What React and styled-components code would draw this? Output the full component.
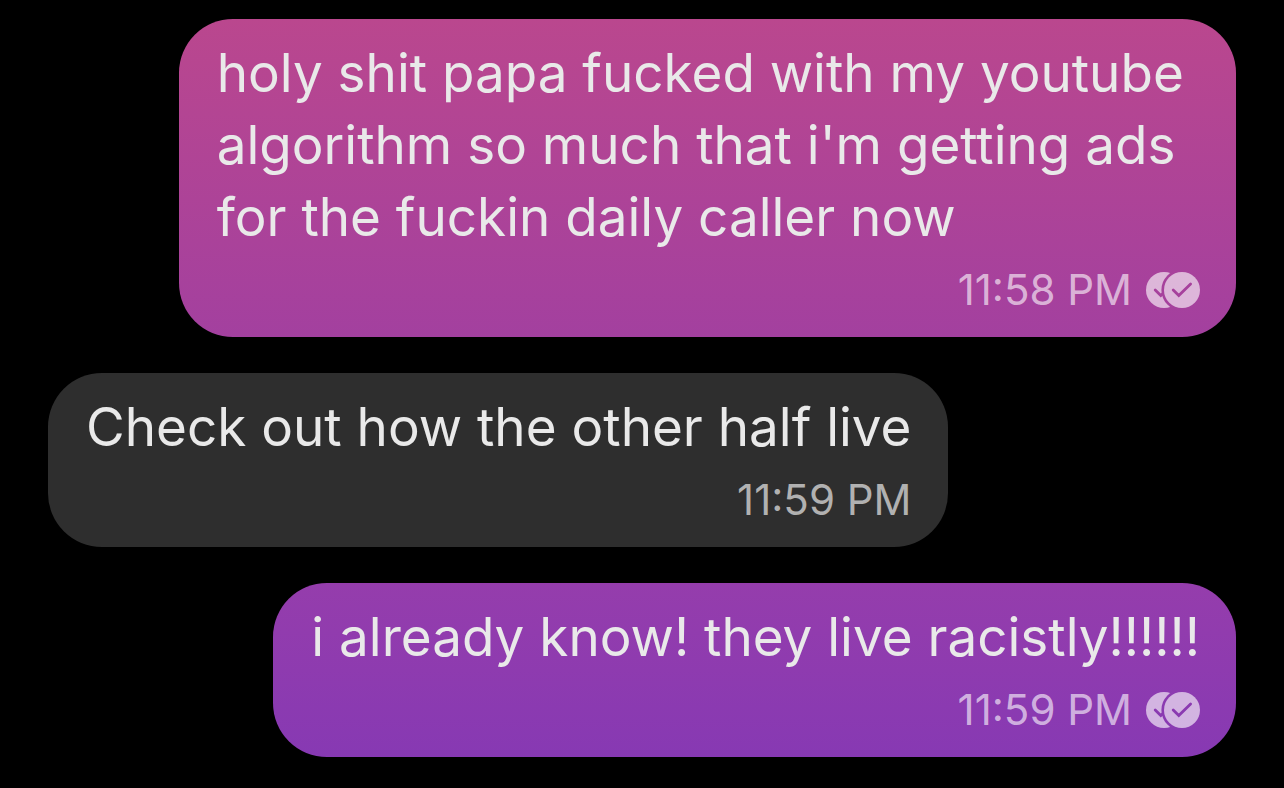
import React, { useId } from 'react';
import styled, { createGlobalStyle } from 'styled-components';

const GlobalStyle = createGlobalStyle`
  body {
    margin: 0;
    background-color: #000;
    font-family: Inter, 'Liberation Sans', sans-serif;
  }
`;

const BUBBLE_COLORS = {
  pink: 'linear-gradient(180deg, #ba478e 0%, #a3409f 100%)',
  gray: '#2e2e2e',
  purple: 'linear-gradient(180deg, #953dac 0%, #8739b3 100%)',
};

const messages = [
  {
    id: 1,
    text: "holy shit papa fucked with my youtube algorithm so much that i'm getting ads for the fuckin daily caller now",
    time: '11:58 PM',
    sent: true,
    color: 'pink',
  },
  {
    id: 2,
    text: 'Check out how the other half live',
    time: '11:59 PM',
    sent: false,
    color: 'gray',
  },
  {
    id: 3,
    text: 'i already know! they live racistly!!!!!!',
    time: '11:59 PM',
    sent: true,
    color: 'purple',
  },
];

const ReadIcon = () => {
  const id = useId();

  return (
    <svg width="54" height="36" viewBox="0 0 54 36" role="img" aria-label="Read">
      <defs>
        <mask id={`${id}-back`}>
          <rect width="54" height="36" fill="#fff" />
          <path d="M9.2 18 L14.8 23.6 L27 12" fill="none" stroke="#000" strokeWidth="2.8" strokeLinecap="round" />
          <circle cx="36" cy="18" r="20.6" fill="#000" />
        </mask>
        <mask id={`${id}-front`}>
          <rect width="54" height="36" fill="#fff" />
          <path d="M27.2 18 L32.8 23.6 L44.6 11.9" fill="none" stroke="#000" strokeWidth="2.8" strokeLinecap="round" />
        </mask>
      </defs>
      <circle cx="18" cy="18" r="18" fill="currentColor" mask={`url(#${id}-back)`} />
      <circle cx="36" cy="18" r="18" fill="currentColor" mask={`url(#${id}-front)`} />
    </svg>
  );
};

const Message = ({ message }) => {
  return (
    <Row $sent={message.sent}>
      <Bubble $color={message.color}>
        <Text>{message.text}</Text>
        <Meta $sent={message.sent}>
          <time>{message.time}</time>
          {message.sent && <ReadIcon />}
        </Meta>
      </Bubble>
    </Row>
  );
};

const App = () => {
  return (
    <>
      <GlobalStyle />
      <Chat>
        {messages.map((message) => (
          <Message key={message.id} message={message} />
        ))}
      </Chat>
    </>
  );
};

const Chat = styled.main`
  display: flex;
  flex-direction: column;
  gap: 36px;
  padding: 19px 48px 31px;
`;

const Row = styled.div`
  display: flex;
  justify-content: ${({ $sent }) => ($sent ? 'flex-end' : 'flex-start')};
`;

const Bubble = styled.article`
  box-sizing: border-box;
  max-width: 89%;
  padding: 18px 36px 20px 38px;
  border-radius: 54px;
  background: ${({ $color }) => BUBBLE_COLORS[$color]};
`;

const Text = styled.p`
  margin: 0 0 10px;
  font-size: 53px;
  line-height: 72px;
  color: #e9e9e9;
`;

const Meta = styled.div`
  display: flex;
  justify-content: flex-end;
  align-items: center;
  gap: 14px;
  font-size: 42px;
  line-height: 54px;
  color: ${({ $sent }) => ($sent ? 'rgba(255, 255, 255, 0.62)' : '#b1b1b1')};
`;

export default App;
